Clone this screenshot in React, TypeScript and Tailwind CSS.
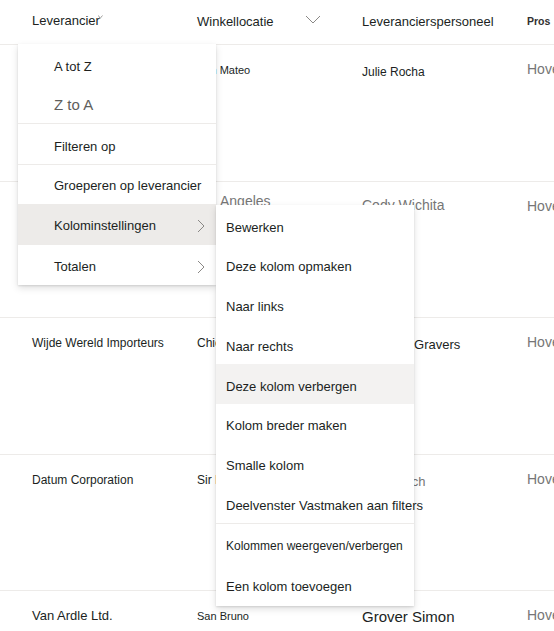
import React from 'react'

const font = { fontFamily: '"Liberation Sans", Arial, sans-serif' }

type Row = {
  a: React.ReactNode
  b: React.ReactNode
  c: React.ReactNode
  d: React.ReactNode
}

const hove = <span className="text-[14px] text-[#767676] whitespace-nowrap">Hoveniersbedrijf</span>

const rows: Row[] = [
  {
    a: <span className="text-[12px]">Contoso Pharmaceuticals</span>,
    b: <span className="text-[11px]">San Mateo</span>,
    c: <span className="text-[12px]">Julie Rocha</span>,
    d: hove,
  },
  {
    a: <span className="text-[12px]">Fabrikam</span>,
    b: <span className="text-[14px] text-[#767676] -mt-[5px] pl-[23px] block">Angeles</span>,
    c: <span className="text-[14px] text-[#767676] -mt-[3px] block">Cody Wichita</span>,
    d: hove,
  },
  {
    a: <span className="text-[12px]">Wijde Wereld Importeurs</span>,
    b: <span className="text-[12px]">Chicago</span>,
    c: <span className="text-[13px]">Kenneth Gravers</span>,
    d: hove,
  },
  {
    a: <span className="text-[12px]">Datum Corporation</span>,
    b: <span className="text-[12px]">Sir Lowell</span>,
    c: <span className="text-[13px] text-[#767676]">Mila Bosch</span>,
    d: hove,
  },
  {
    a: <span className="text-[13px]">Van Ardle Ltd.</span>,
    b: <span className="text-[11px]">San Bruno</span>,
    c: <span className="text-[15px]">Grover Simon</span>,
    d: hove,
  },
]

function ChevronRight() {
  return (
    <svg width="8" height="14" viewBox="0 0 8 14" fill="none" className="shrink-0">
      <path d="M1 1l6 6-6 6" stroke="#8a8886" strokeWidth="1" />
    </svg>
  )
}

function ChevronDown() {
  return (
    <svg width="16" height="9" viewBox="0 0 16 9" fill="none" className="shrink-0">
      <path d="M1 1l7 7 7-7" stroke="#8a8886" strokeWidth="1" />
    </svg>
  )
}

function MenuItem({
  children,
  h,
  className = '',
  sub = false,
}: {
  children: React.ReactNode
  h: string
  className?: string
  sub?: boolean
}) {
  return (
    <div className={`flex items-center justify-between pl-9 pr-[11px] text-[#201f1e] ${h} ${className}`}>
      <span>{children}</span>
      {sub && <ChevronRight />}
    </div>
  )
}

function SubItem({
  children,
  h = 'h-[39.75px] pt-[5px]',
  className = '',
}: {
  children: React.ReactNode
  h?: string
  className?: string
}) {
  return (
    <div className={`flex items-center pl-[10px] text-[13px] text-[#201f1e] whitespace-nowrap ${h} ${className}`}>
      {children}
    </div>
  )
}

const menuShadow = 'shadow-[0_3.2px_7.2px_rgba(0,0,0,0.13),0_0.6px_1.8px_rgba(0,0,0,0.11)]'

export default function App() {
  return (
    <div className="relative w-[554px] h-[631px] overflow-hidden bg-white text-[#201f1e]" style={font}>
      {/* Header */}
      <div className="grid grid-cols-[197px_165px_165px_1fr] h-[45px] border-b border-[#edebe9] items-center text-[13px]">
        <div className="pl-8 flex items-center pb-[2px]">
          Leverancier
          <svg width="5" height="4" viewBox="0 0 5 4" className="-ml-[2px] -mt-[8px]">
            <path d="M0.5 0.5l1.5 3 2.5-3" stroke="#8a8886" strokeWidth="0.8" fill="none" />
          </svg>
        </div>
        <div className="flex items-center">
          <span>Winkellocatie</span>
          <span className="ml-[31px] -mt-[6px]">
            <ChevronDown />
          </span>
        </div>
        <div>Leverancierspersoneel</div>
        <div className="text-[10.5px] font-semibold text-[#323130]">Pros</div>
      </div>

      {/* Rows */}
      {rows.map((r, i) => (
        <div
          key={i}
          className="grid grid-cols-[197px_165px_165px_1fr] h-[136.5px] border-b border-[#edebe9] items-start pt-[16px] leading-[16px]"
        >
          <div className="pl-8 whitespace-nowrap overflow-hidden">{r.a}</div>
          <div className="whitespace-nowrap">{r.b}</div>
          <div className="whitespace-nowrap pt-[2px]">{r.c}</div>
          <div className="overflow-hidden">{r.d}</div>
        </div>
      ))}

      {/* Column menu */}
      <div className={`absolute left-[18px] top-[44px] w-[198px] bg-white text-[13px] ${menuShadow}`}>
        <MenuItem h="h-[44px] pt-[2px]">A tot Z</MenuItem>
        <MenuItem h="h-[35px]" className="text-[15px] !text-[#605e5c]">
          Z to A
        </MenuItem>
        <div className="h-px bg-[#edebe9]" />
        <MenuItem h="h-[40px] pt-[5px]">Filteren op</MenuItem>
        <div className="h-px bg-[#edebe9]" />
        <MenuItem h="h-[39px] pt-[2px]">Groeperen op leverancier</MenuItem>
        <MenuItem h="h-[41px] pt-[3px]" className="bg-[#edebe9]" sub>
          Kolominstellingen
        </MenuItem>
        <MenuItem h="h-[40px] pt-[3px]" sub>
          Totalen
        </MenuItem>
      </div>

      {/* Submenu */}
      <div className={`absolute left-[216px] top-[205px] w-[198px] bg-white ${menuShadow}`}>
        <SubItem>Bewerken</SubItem>
        <SubItem>Deze kolom opmaken</SubItem>
        <SubItem>Naar links</SubItem>
        <SubItem>Naar rechts</SubItem>
        <SubItem className="bg-[#f3f2f1]">Deze kolom verbergen</SubItem>
        <SubItem>Kolom breder maken</SubItem>
        <SubItem>Smalle kolom</SubItem>
        <SubItem>Deelvenster Vastmaken aan filters</SubItem>
        <div className="h-px bg-[#edebe9]" />
        <SubItem h="h-[43px]" className="!text-[12px]">
          Kolommen weergeven/verbergen
        </SubItem>
        <SubItem h="h-[39px]">Een kolom toevoegen</SubItem>
      </div>
    </div>
  )
}
